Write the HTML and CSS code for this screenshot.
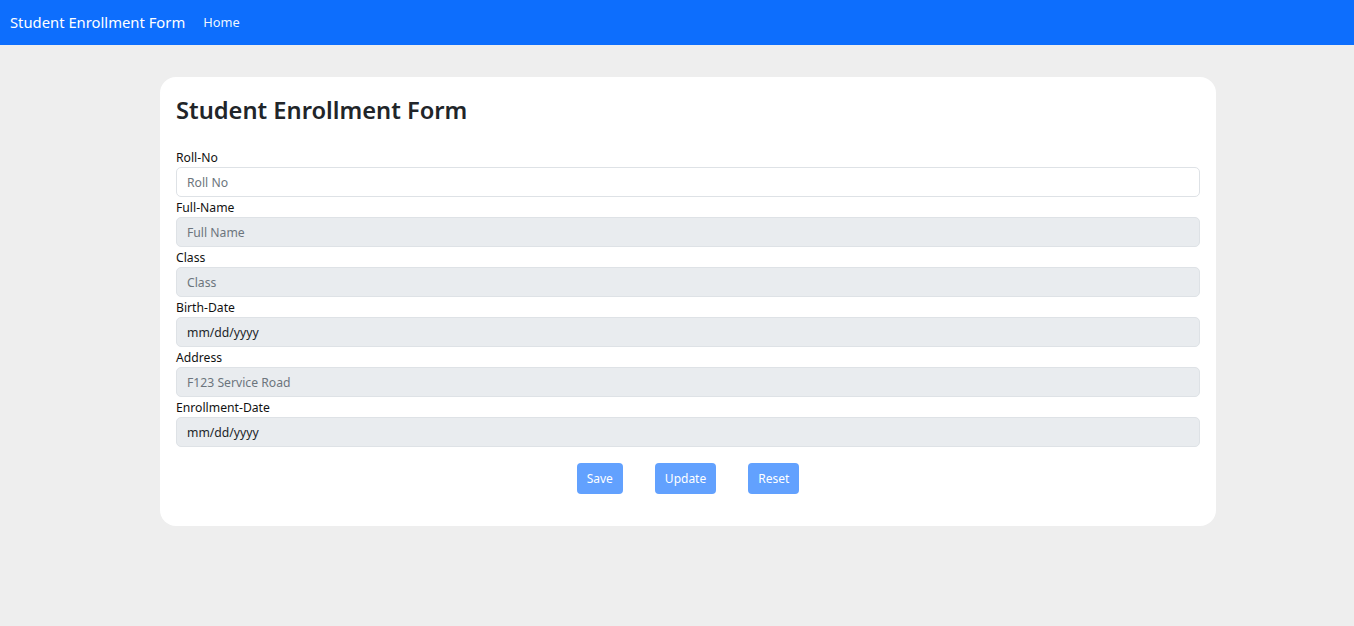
FILE: index.html
```html
<!DOCTYPE html>
<html lang="en">
<head>
<meta charset="utf-8">
<title>Student Enrollment Form</title>
<link rel="stylesheet" href="styles.css">
</head>
<body>
<nav class="navbar">
  <span class="brand">Student Enrollment Form</span>
  <a class="nav-link" href="#">Home</a>
</nav>
<main class="page">
  <section class="card">
    <h2 class="title">Student Enrollment Form</h2>
    <form class="form">
      <div class="field">
        <label class="label">Roll-No</label>
        <input class="control" type="text" placeholder="Roll No">
      </div>
      <div class="field">
        <label class="label">Full-Name</label>
        <input class="control" type="text" placeholder="Full Name" disabled>
      </div>
      <div class="field">
        <label class="label">Class</label>
        <input class="control" type="text" placeholder="Class" disabled>
      </div>
      <div class="field">
        <label class="label">Birth-Date</label>
        <div class="control date">mm/dd/yyyy</div>
      </div>
      <div class="field">
        <label class="label">Address</label>
        <input class="control" type="text" placeholder="F123 Service Road" disabled>
      </div>
      <div class="field">
        <label class="label">Enrollment-Date</label>
        <div class="control date">mm/dd/yyyy</div>
      </div>
      <div class="actions">
        <button class="btn" type="button" disabled>Save</button>
        <button class="btn" type="button" disabled>Update</button>
        <button class="btn" type="button" disabled>Reset</button>
      </div>
    </form>
  </section>
</main>
</body>
</html>
```
FILE: styles.css
```css
* { box-sizing: border-box; }
html, body { margin: 0; padding: 0; }
body {
  background: #eeeeee;
  font-family: "Noto Sans", "Open Sans", sans-serif;
  color: #212529;
  height: 626px;
}
.navbar {
  height: 45px;
  background: #0d6efd;
  display: flex;
  align-items: center;
  padding: 0 10px;
  gap: 18px;
}
.brand {
  color: #fff;
  font-size: 14.8px;
  line-height: 1;
}
.nav-link {
  color: rgba(255,255,255,0.95);
  font-size: 12.8px;
  text-decoration: none;
  line-height: 1;
}
.page {
  display: flex;
  padding: 32px 0 0 160px;
}
.card {
  width: 1056px;
  background: #fff;
  border-radius: 16px;
  padding: 18px 16px 32px;
}
.title {
  margin: 0 0 22px;
  font-size: 23.7px;
  font-weight: 600;
  line-height: 30px;
  color: #212529;
}
.form { display: flex; flex-direction: column; }
.field { display: flex; flex-direction: column; }
.label {
  font-size: 12.2px;
  line-height: 20px;
  padding-top: 1px;
  height: 20px;
  color: #111;
}
.control {
  height: 30px;
  width: 100%;
  border: 1px solid #dee2e6;
  border-radius: 5px;
  padding: 0 10px;
  font-family: inherit;
  font-size: 12.2px;
  color: #212529;
  background: #fff;
  display: flex;
  align-items: center;
  outline: none;
}
.control::placeholder { color: #6c757d; opacity: 1; }
.control:disabled, .control.date { background: #e9ecef; }
.actions {
  display: flex;
  justify-content: center;
  gap: 32px;
  margin-top: 16px;
}
.btn {
  height: 31px;
  padding: 0 10px;
  border: none;
  border-radius: 4px;
  background: #62a1fe;
  color: #fff;
  font-family: inherit;
  font-size: 12px;
}
```
